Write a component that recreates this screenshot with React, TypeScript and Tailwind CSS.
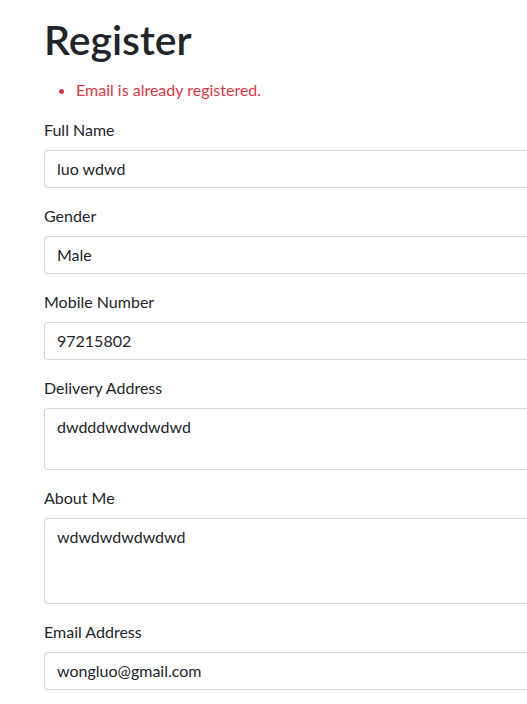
const fields = [
  { key: "name", label: "Full Name", value: "luo wdwd" },
  { key: "gender", label: "Gender", value: "Male" },
  { key: "mobile", label: "Mobile Number", value: "97215802" },
  { key: "address", label: "Delivery Address", value: "dwdddwdwdwdwd", rows: 2 },
  { key: "about", label: "About Me", value: "wdwdwdwdwdwd", rows: 3 },
  { key: "email", label: "Email Address", value: "wongluo@gmail.com" },
];

export default function App() {
  return (
    <div className="h-screen w-screen overflow-hidden bg-white font-['Lato',sans-serif] text-[#212529]">
      <div className="w-[640px] pl-[44px] pt-[16px]">
        {/* Heading */}
        <h1 className="text-[41px] font-semibold leading-[48px]">Register</h1>

        {/* Validation errors */}
        <ul className="mt-[14px] mb-[16px] list-disc pl-[32px] text-[16px] leading-[24px] text-[#dc3545]">
          <li>Email is already registered.</li>
        </ul>

        {/* Form fields */}
        {fields.map((f) => (
          <div key={f.key} className="mb-[16px]">
            <label className="mb-[8px] block text-[16px] leading-[24px]">{f.label}</label>
            {f.rows ? (
              <div
                className="w-full rounded-[4px] border border-[#ced4da] px-[12px] py-[6px] text-[16px] leading-[24px] text-[#212529]"
                style={{ height: f.rows * 24 + 14 }}
              >
                {f.value}
              </div>
            ) : (
              <div className="h-[38px] w-full rounded-[4px] border border-[#ced4da] px-[12px] py-[6px] text-[16px] leading-[24px] text-[#212529]">
                {f.value}
              </div>
            )}
          </div>
        ))}
      </div>
    </div>
  );
}
